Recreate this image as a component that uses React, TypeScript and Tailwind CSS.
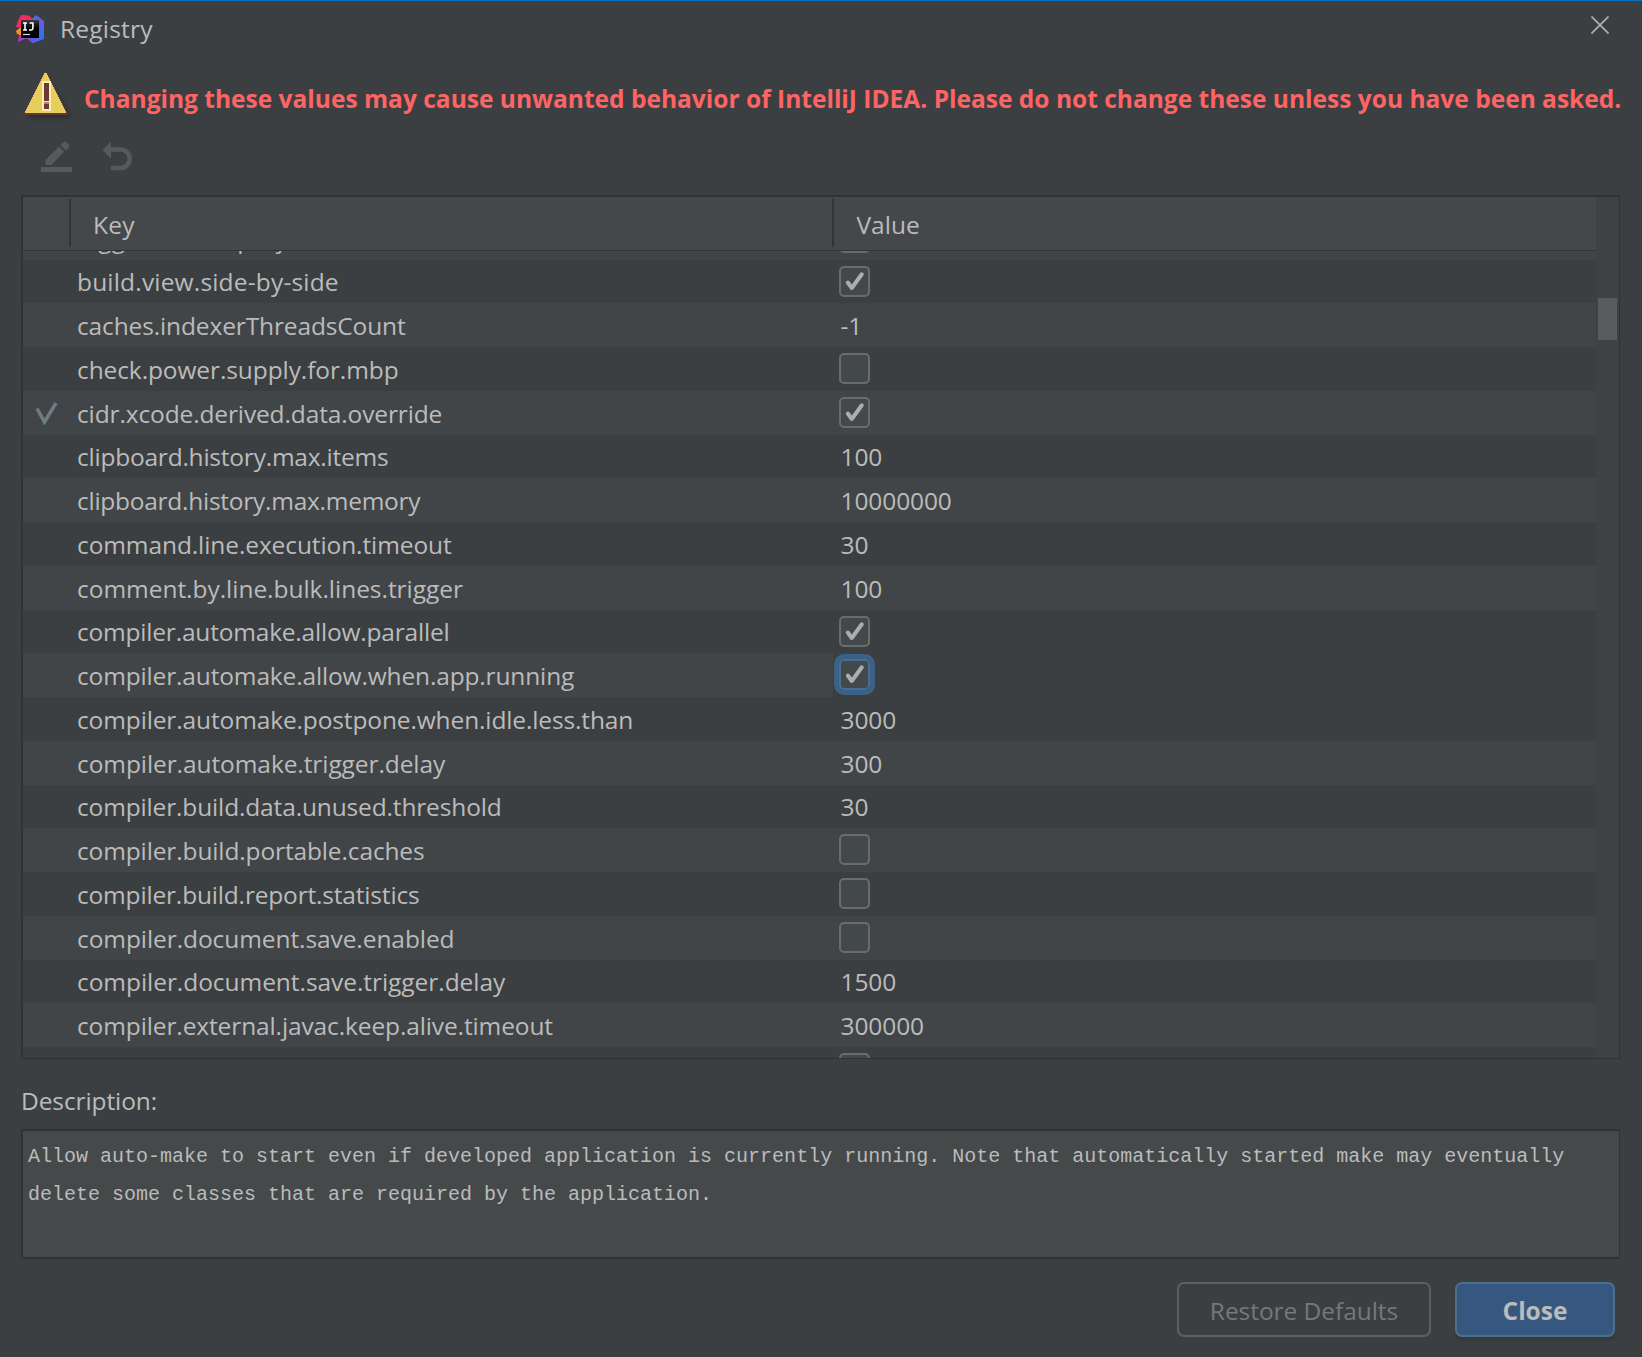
import React from 'react'

type Row = {
  name: string
  value: string | boolean
  tracking: string
  changed?: boolean
  focused?: boolean
}

const rows: Row[] = [
  { name: 'bigger.font.in.project.view', value: false, tracking: 'tracking-[0.1px]' },
  { name: 'build.view.side-by-side', value: true, tracking: 'tracking-[0.18px]' },
  { name: 'caches.indexerThreadsCount', value: '-1', tracking: 'tracking-[-0.133px]' },
  { name: 'check.power.supply.for.mbp', value: false, tracking: 'tracking-[-0.1px]' },
  { name: 'cidr.xcode.derived.data.override', value: true, tracking: 'tracking-[-0.127px]', changed: true },
  { name: 'clipboard.history.max.items', value: '100', tracking: 'tracking-[-0.226px]' },
  { name: 'clipboard.history.max.memory', value: '10000000', tracking: 'tracking-[-0.262px]' },
  { name: 'command.line.execution.timeout', value: '30', tracking: 'tracking-[-0.098px]' },
  { name: 'comment.by.line.bulk.lines.trigger', value: '100', tracking: 'tracking-[-0.035px]' },
  { name: 'compiler.automake.allow.parallel', value: true, tracking: 'tracking-[-0.2px]' },
  { name: 'compiler.automake.allow.when.app.running', value: true, tracking: 'tracking-[-0.151px]', focused: true },
  { name: 'compiler.automake.postpone.when.idle.less.than', value: '3000', tracking: 'tracking-[-0.13px]' },
  { name: 'compiler.automake.trigger.delay', value: '300', tracking: 'tracking-[-0.083px]' },
  { name: 'compiler.build.data.unused.threshold', value: '30', tracking: 'tracking-[-0.15px]' },
  { name: 'compiler.build.portable.caches', value: false, tracking: 'tracking-[-0.133px]' },
  { name: 'compiler.build.report.statistics', value: false, tracking: 'tracking-[-0.177px]' },
  { name: 'compiler.document.save.enabled', value: false, tracking: 'tracking-[-0.08px]' },
  { name: 'compiler.document.save.trigger.delay', value: '1500', tracking: 'tracking-[-0.053px]' },
  { name: 'compiler.external.javac.keep.alive.timeout', value: '300000', tracking: 'tracking-[-0.12px]' },
  { name: '', value: false, tracking: '' },
]

function IdeaLogo() {
  return (
    <svg className="h-7 w-7 shrink-0" viewBox="0 0 28 28">
      <defs>
        <linearGradient id="lg-blue" x1="0" y1="0" x2="1" y2="1">
          <stop offset="0" stopColor="#2f7df0" />
          <stop offset="0.5" stopColor="#6b57e6" />
          <stop offset="1" stopColor="#1c7cf0" />
        </linearGradient>
        <linearGradient id="lg-red" x1="0" y1="0" x2="0" y2="1">
          <stop offset="0" stopColor="#fe2857" />
          <stop offset="1" stopColor="#e0307a" />
        </linearGradient>
        <linearGradient id="lg-purple" x1="0" y1="0" x2="1" y2="0">
          <stop offset="0" stopColor="#c22fb4" />
          <stop offset="1" stopColor="#4d62e8" />
        </linearGradient>
        <linearGradient id="lg-black" x1="0" y1="0" x2="0" y2="1">
          <stop offset="0" stopColor="#3a3a3a" />
          <stop offset="0.5" stopColor="#000" />
        </linearGradient>
      </defs>
      <path d="M15 5 20 0l8 6v18l-11 4-7-5z" fill="url(#lg-blue)" />
      <path d="M4 14 2 27l9-4 6 5 4-6z" fill="url(#lg-purple)" />
      <path d="M0 16l5-4v8l-4-1z" fill="#ff8a1f" />
      <path d="M5 0l8 .5 5 5L6 13 0 12l2-6z" fill="url(#lg-red)" />
      <path d="M5 5h18v18H5z" fill="url(#lg-black)" />
      <path d="M7 8h4M9 8v7M7 15h4" stroke="#fff" strokeWidth="1.6" fill="none" />
      <path d="M13.5 8h3.400v5q0 2-2 2h-1.900" stroke="#fff" strokeWidth="1.6" fill="none" />
      <path d="M7 19.500h7" stroke="#ddd" strokeWidth="1.2" />
    </svg>
  )
}

function WarningIcon() {
  const steps = [0, 1, 2, 3, 4, 5, 6, 7, 8, 9, 10, 11, 12, 13, 14, 15, 16, 17, 18, 19]
  return (
    <svg className="h-[50px] w-[50px] shrink-0 overflow-visible" viewBox="0 0 50 50" shapeRendering="crispEdges">
      <defs>
        <filter id="soft" x="-20%" y="-20%" width="150%" height="150%">
          <feGaussianBlur stdDeviation="2" />
        </filter>
      </defs>
      <path d="M23 3 47 46H4z" fill="#000" opacity="0.3" filter="url(#soft)" />
      {steps.map((i) => (
        <path key={i} d={`M${19 - i} ${1 + i * 2}h${5 + i * 2}v3h-${5 + i * 2}z`} fill="#633534" />
      ))}
      <path d="M-1 40h45v3h-45z" fill="#633534" />
      {steps.map((i) => (
        <path key={i} d={`M${20 - i} ${1 + i * 2}h${3 + i * 2}v2h-${3 + i * 2}z`} fill="#e6ce5c" />
      ))}
      <path d="M18 9h9v30h-9z" fill="#fbeeb0" />
      <path d="M20 11h5v18h-5zM20 32h5v5h-5z" fill="#6e3838" />
      <path d="M20 30h5v2h-5z" fill="#a88a4c" />
    </svg>
  )
}

function CheckBox({ checked, focused }: { checked: boolean; focused?: boolean }) {
  return (
    <span
      className={
        focused
          ? 'ml-[6px] flex h-[31px] w-[31px] items-center justify-center rounded-[5px] border-2 border-[#466d94] bg-[#43494a] outline-5 outline-[#3d6185]'
          : 'ml-[6px] flex h-[31px] w-[31px] items-center justify-center rounded-[5px] border-2 border-[#6b6b6b] bg-[#43494a]'
      }
    >
      {checked && (
        <svg className="h-[27px] w-[27px]" viewBox="0 0 27 27" fill="none" stroke="#adadad" strokeWidth="4" strokeLinecap="round" strokeLinejoin="round">
          <path d="M6.800 14.500 10.800 20 20.800 6.300" />
        </svg>
      )}
    </span>
  )
}

function TableRow({ row, index }: { row: Row; index: number }) {
  const striped = index % 2 === 0
  const short = index % 4 === 1 || index === 19
  return (
    <div className={`flex shrink-0 whitespace-nowrap ${short ? 'h-[43px] leading-[43px]' : 'h-11 leading-[46px]'} ${striped ? 'bg-[#414547]' : 'bg-[#3c3f41]'}`}>
      <div className="flex w-12 items-center pl-3">
        {row.changed && (
          <svg className="h-6 w-6" viewBox="0 0 24 24" fill="none" stroke="#6e7b81" strokeWidth="3.6">
            <path d="M2 7.500 9.500 21 21 2" />
          </svg>
        )}
      </div>
      <div className={`w-[762px] pl-[6px] ${row.tracking}`}>{row.name}</div>
      <div className={`flex-1 ${row.focused ? 'bg-[#3c3f41]' : ''}`}>
        {typeof row.value === 'boolean' ? (
          <div className="pt-[6px]">
            <CheckBox checked={row.value} focused={row.focused} />
          </div>
        ) : (
          <span className="block pl-[7.5px] tracking-[-0.1px]">{row.value}</span>
        )}
      </div>
    </div>
  )
}

export default function App() {
  return (
    <div className="flex h-[1357px] w-[1642px] flex-col overflow-hidden border-t border-[#0a70c4] bg-[#3c3f41] font-['Open_Sans',sans-serif] text-[24.5px] text-[#bbbbbb]">
      <header className="flex h-[58px] shrink-0 justify-between pr-[33px] pl-4">
        <div className="flex h-14 items-center gap-4">
          <IdeaLogo />
          <h1 className="tracking-[0.2px]">Registry</h1>
        </div>
        <svg className="mt-[15px] h-[18px] w-[18px]" viewBox="0 0 18 18" stroke="#b0b0b0" strokeWidth="1.7">
          <path d="M.5.5l17 17M17.500.5l-17 17" />
        </svg>
      </header>

      <div className="flex h-[68px] shrink-0 pt-[13px] pl-6">
        <WarningIcon />
        <p className="ml-[10px] pt-2 text-[24.5px] leading-[38px] font-bold tracking-[0.01px] whitespace-nowrap text-[#ff6464]">
          Changing these values may cause unwanted behavior of IntelliJ IDEA. Please do not change these unless you have been asked.
        </p>
      </div>

      <div className="flex h-[68px] shrink-0 gap-[29px] pt-[13px] pl-10">
        <svg className="h-[33px] w-[33px]" viewBox="0 0 33 33" fill="#595959">
          <path d="M1 27h31v5H1z" />
          <path d="M5.500 20 19 6.500 24 11.500 11.500 25H5.500z" />
          <path d="M20.500 5 23.500 2q1.500-1.300 3 0l2.500 2.500q1.300 1.500 0 3L26 10.500z" />
        </svg>
        <svg className="h-[33px] w-[30px]" viewBox="0 0 30 33" fill="#595959">
          <path d="M.5 10 9 1.500v17z" />
          <path d="M9 9.500h9.500a9 9 0 0 1 0 18.500H9" fill="none" stroke="#595959" strokeWidth="4.5" />
        </svg>
      </div>

      <section className="ml-[21px] flex h-[864px] w-[1599px] shrink-0 border-t-2 border-r border-b border-l-2 border-[#323232]">
        <div className="flex h-full w-[1573px] flex-col overflow-hidden">
          <div className="flex h-[54px] shrink-0 border-b border-[#323537] bg-[#45484a] pt-[2px]">
            <div className="h-12 w-12 border-r-2 border-[#333638]" />
            <div className="h-12 w-[763px] border-r-2 border-[#333638] pl-[22px] leading-[51px] tracking-[0.2px]">Key</div>
            <div className="h-12 pl-[22.5px] leading-[51px]">Value</div>
          </div>
          <div className="flex min-h-0 flex-1 flex-col overflow-hidden">
            <div className="-mt-[35px] flex flex-col">
              {rows.map((row, i) => (
                <TableRow key={i} row={row} index={i} />
              ))}
            </div>
          </div>
        </div>
        <div className="flex-1 bg-[#3f4244] pt-[101px] pl-[2px]">
          <div className="h-[42px] w-[19px] bg-[#595c5d]" />
        </div>
      </section>

      <label className="ml-[21px] h-[70px] shrink-0 pt-[22px] leading-[40px] tracking-[-0.1px]">Description:</label>

      <div className="ml-[21px] h-[130px] w-[1599px] shrink-0 border-t-2 border-r border-b-2 border-l-2 border-[#323232] bg-[#45494a] pt-[7px] pl-[5px] font-['Liberation_Mono',monospace] text-[20px] leading-[38px]">
        Allow auto-make to start even if developed application is currently running. Note that automatically started make may eventually
        <br />
        delete some classes that are required by the application.
      </div>

      <footer className="flex justify-end gap-6 pt-[23px] pr-[27px]">
        <button className="h-[55px] w-[254px] rounded-[7px] border-2 border-[#5e6060] pt-[3px] tracking-[-0.05px] text-[#777777]">Restore Defaults</button>
        <button className="h-[55px] w-[160px] rounded-[7px] border-2 border-[#4c708c] bg-[#365880] pt-[3px] font-bold shadow-[0_4px_1px_#36393a]">Close</button>
      </footer>
    </div>
  )
}
